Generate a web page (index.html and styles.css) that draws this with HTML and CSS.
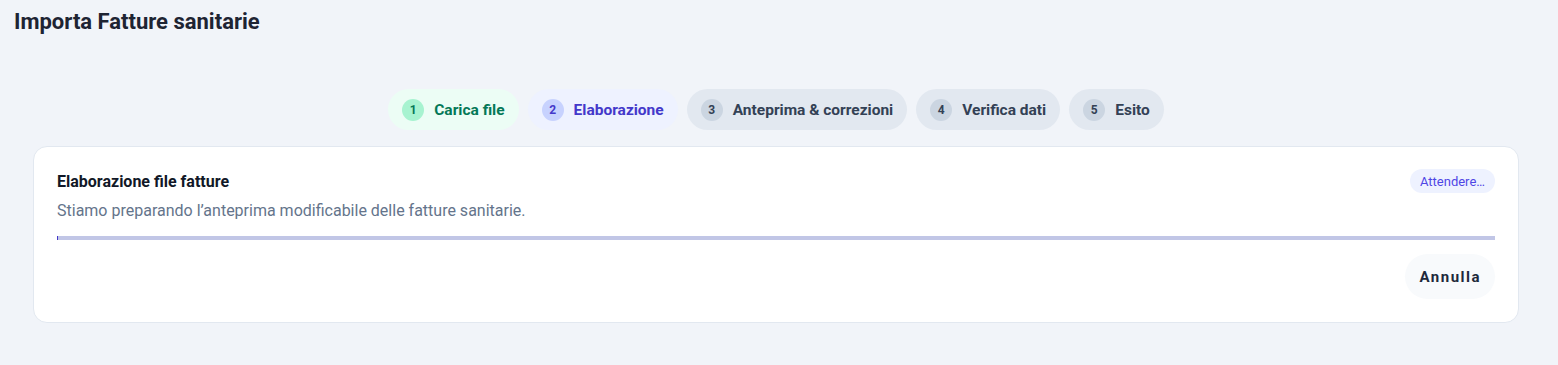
FILE: index.html
```html
<!DOCTYPE html>
<html lang="it">
<head>
<meta charset="utf-8">
<title>Importa Fatture sanitarie</title>
<link rel="stylesheet" href="styles.css">
</head>
<body>
<div class="page">
  <h1 class="title">Importa Fatture sanitarie</h1>
  <div class="main">
    <div class="steps">
      <div class="step step-done"><span class="num">1</span><span class="label">Carica file</span></div>
      <div class="step step-active"><span class="num">2</span><span class="label">Elaborazione</span></div>
      <div class="step"><span class="num">3</span><span class="label">Anteprima &amp; correzioni</span></div>
      <div class="step"><span class="num">4</span><span class="label">Verifica dati</span></div>
      <div class="step"><span class="num">5</span><span class="label">Esito</span></div>
    </div>
    <div class="card">
      <div class="card-head">
        <div class="card-title">Elaborazione file fatture</div>
        <span class="badge">Attendere…</span>
      </div>
      <p class="card-sub">Stiamo preparando l’anteprima modificabile delle fatture sanitarie.</p>
      <div class="progress"><div class="progress-fill" style="width: 1px"></div></div>
      <div class="actions"><button class="btn">Annulla</button></div>
    </div>
  </div>
</div>
</body>
</html>
```
FILE: styles.css
```css
* { box-sizing: border-box; }
html, body { margin: 0; padding: 0; }
body {
  background: #f1f4f9;
  font-family: Roboto, "Noto Sans", Arial, sans-serif;
  color: #1e293b;
}
.page { padding: 8px 0 0 14px; }
.title {
  margin: 0;
  font-size: 22px;
  line-height: 28px;
  font-weight: 700;
  color: #1e2433;
}
.main {
  margin: 53px 39px 0 19px;
}
.steps {
  display: flex;
  justify-content: center;
  gap: 9px;
}
.step {
  display: flex;
  align-items: center;
  gap: 10px;
  height: 41px;
  padding: 0 14px;
  border-radius: 999px;
  background: #e2e8f0;
  color: #334155;
  font-size: 15.5px;
  font-weight: 700;
}
.num {
  width: 22px;
  height: 22px;
  border-radius: 50%;
  background: #cbd5e1;
  display: flex;
  align-items: center;
  justify-content: center;
  font-size: 12px;
  font-weight: 700;
}
.step-done { background: #ecfdf5; color: #047857; }
.step-done .num { background: #a7f3d0; }
.step-active { background: #eef2ff; color: #4338ca; }
.step-active .num { background: #c7d2fe; }
.card {
  margin-top: 16px;
  background: #fff;
  border: 1px solid #e2e8f0;
  border-radius: 14px;
  padding: 22px 23px 23px 23px;
}
.card-head {
  display: flex;
  justify-content: space-between;
  align-items: center;
}
.card-title {
  font-size: 16px;
  font-weight: 700;
  color: #111827;
}
.badge {
  background: #eef2ff;
  color: #4f46e5;
  font-size: 13px;
  padding: 0 10px;
  height: 24px;
  display: flex;
  align-items: center;
  border-radius: 999px;
}
.card-sub {
  margin: 7px 0 0;
  font-size: 16px;
  line-height: 22px;
  color: #64748b;
}
.progress {
  margin-top: 14px;
  height: 4px;
  background: #c1c6e6;
}
.progress-fill {
  height: 100%;
  background: #4338ca;
}
.actions {
  display: flex;
  justify-content: flex-end;
  margin-top: 14px;
}
.btn {
  border: 0;
  background: #f8fafc;
  color: #1e293b;
  font-family: inherit;
  font-size: 15px;
  font-weight: 700;
  letter-spacing: 1.5px;
  height: 45px;
  padding: 0 14px;
  border-radius: 999px;
}
```
